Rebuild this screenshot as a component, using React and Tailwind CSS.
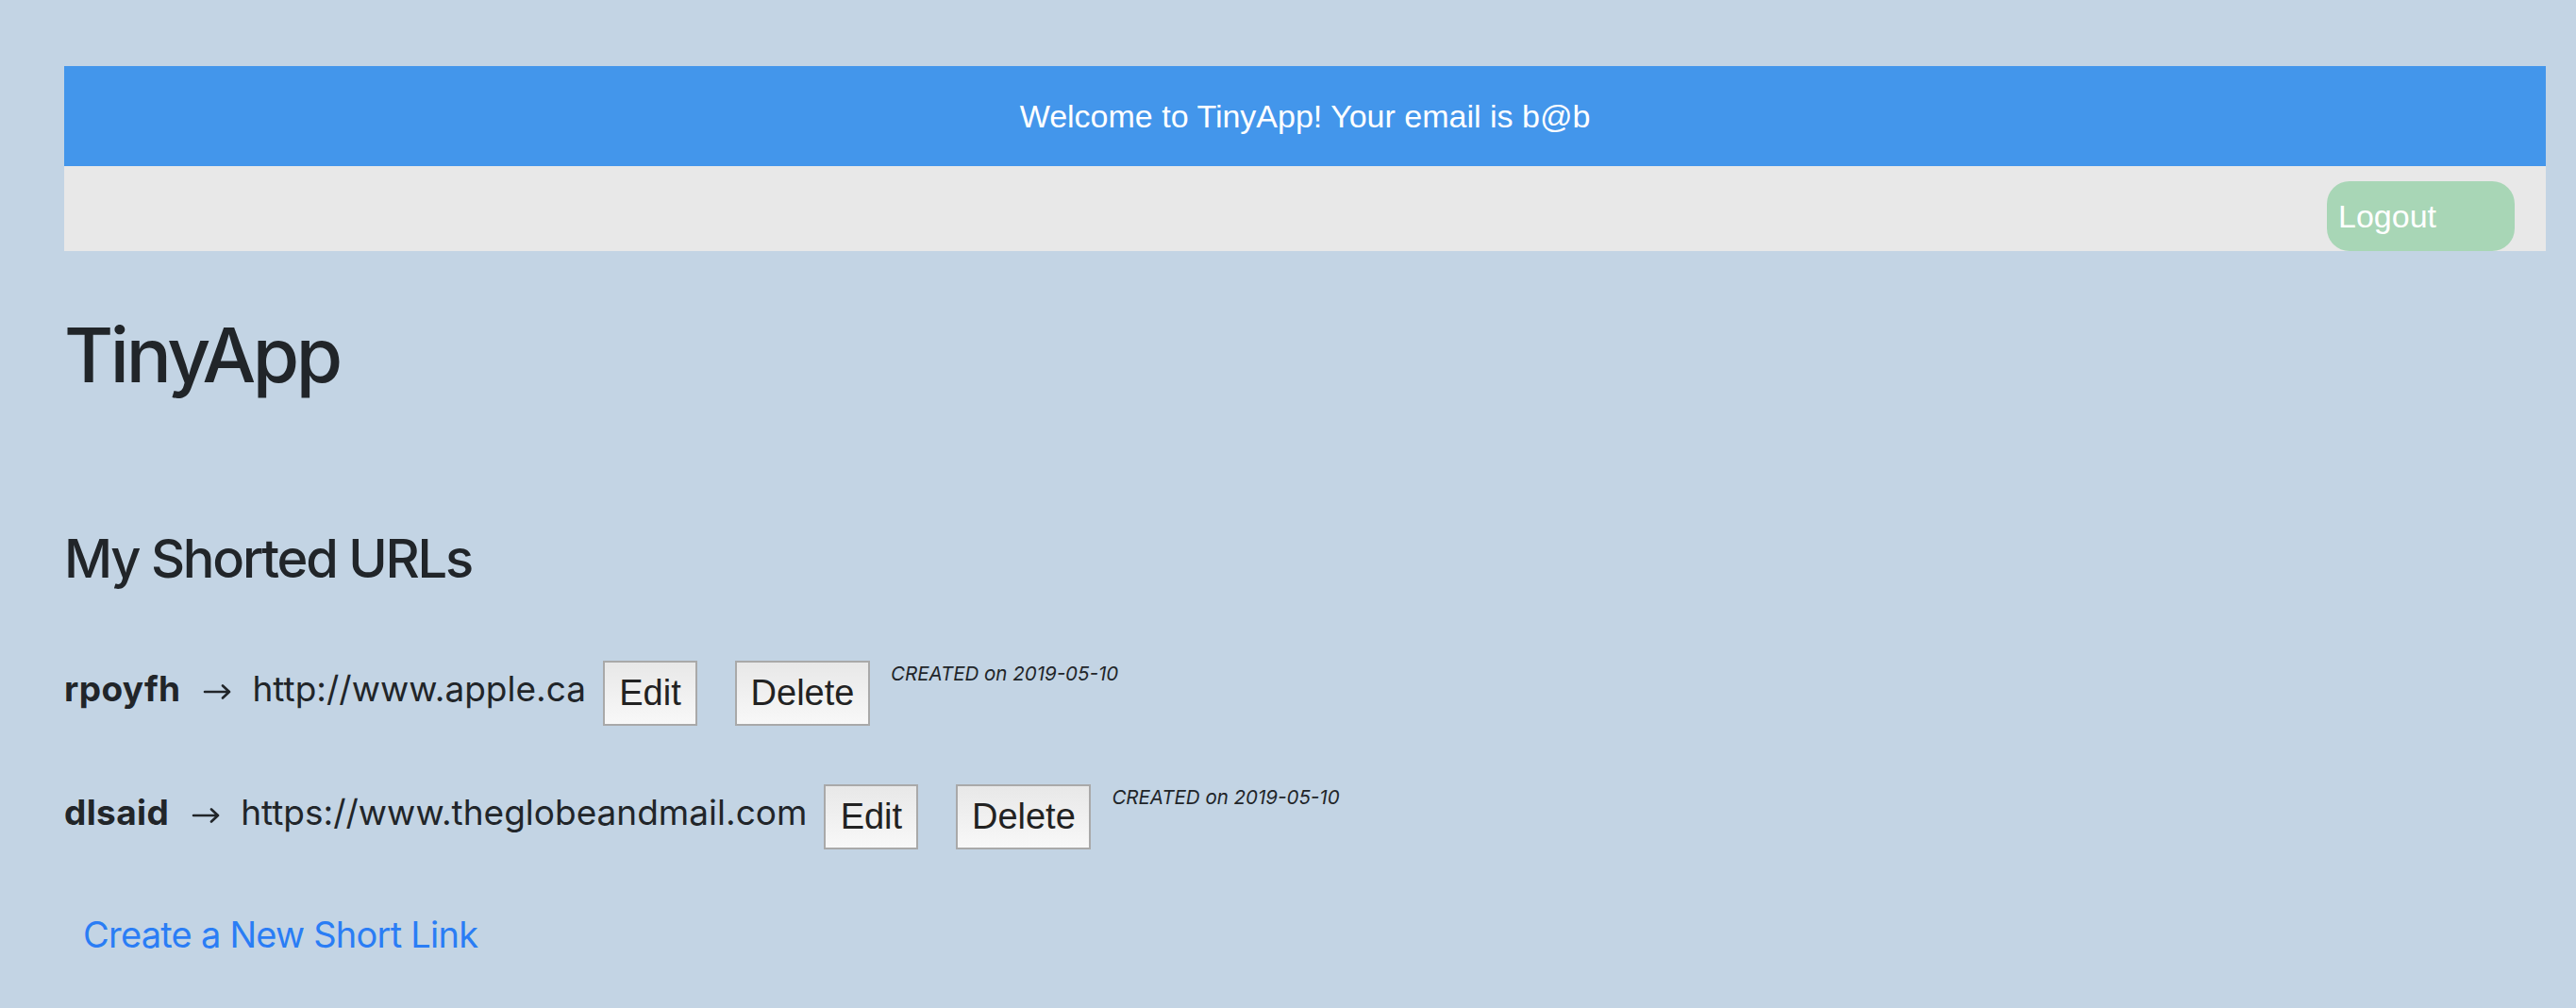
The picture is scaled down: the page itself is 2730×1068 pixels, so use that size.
import React from "react";

const urls = [
  { id: "rpoyfh", longURL: "http://www.apple.ca", created: "2019-05-10" },
  { id: "dlsaid", longURL: "https://www.theglobeandmail.com", created: "2019-05-10" },
];

function Arrow() {
  return (
    <svg
      className="ml-[24px] mt-[25px] shrink-0"
      width="30"
      height="16"
      viewBox="0 0 30 16"
      fill="none"
      stroke="#212529"
      strokeWidth="2.6"
      strokeLinecap="round"
      strokeLinejoin="round"
    >
      <path d="M2 8h26M21 1.5L28 8l-7 6.5" />
    </svg>
  );
}

function UrlRow({ url, first }) {
  const btn =
    "h-[69px] border-2 border-[#a9a9a9] bg-linear-to-b from-[#e8e8e8] to-[#f8f8f8] text-[#222] font-['Liberation_Sans',Arial,sans-serif] flex items-center justify-center shrink-0";
  return (
    <div className={`flex items-start h-[69px] ${first ? "mt-[80px]" : "mt-[62px]"}`}>
      <span className="mt-[11px] text-[37px] leading-none font-bold tracking-[0.01em]">{url.id}</span>
      <Arrow />
      <span className="ml-[22px] mt-[11px] text-[37px] leading-none">{url.longURL}</span>
      <button className={`${btn} ml-[18px] w-[100px] text-[38px]`}>Edit</button>
      <button className={`${btn} ml-[40px] w-[143px] text-[38px]`}>Delete</button>
      <span className="ml-[22px] mt-[4px] text-[20.5px] leading-none italic">
        CREATED on {url.created}
      </span>
    </div>
  );
}

export default function App() {
  return (
    <div className="min-h-screen bg-[#c3d4e4] pl-[68px] pr-[32px] pt-[70px] font-['Inter',sans-serif] text-[#212529]">
      <header className="font-['Liberation_Sans',Arial,sans-serif]">
        <div className="h-[106px] bg-[#4396eb] flex items-center justify-center text-white text-[34px]">
          Welcome to TinyApp! Your email is b@b
        </div>
        <div className="h-[90px] bg-[#e8e8e8] flex justify-end items-end pr-[33px]">
          <button className="h-[74px] w-[199px] rounded-[24px] bg-[#a8d6b6] text-white text-[34px] text-left pl-[12px]">
            Logout
          </button>
        </div>
      </header>

      <h1 className="mt-[70px] text-[80px] leading-none font-medium tracking-[-0.042em]">TinyApp</h1>
      <h3 className="mt-[148px] text-[56px] leading-none font-medium tracking-[-0.04em]">My Shorted URLs</h3>

      {urls.map((u, i) => (
        <UrlRow key={u.id} url={u} first={i === 0} />
      ))}

      <a
        href="#"
        className="inline-block mt-[71px] ml-[20px] text-[38px] leading-none tracking-[-0.02em] text-[#2a7df5]"
      >
        Create a New Short Link
      </a>
    </div>
  );
}
